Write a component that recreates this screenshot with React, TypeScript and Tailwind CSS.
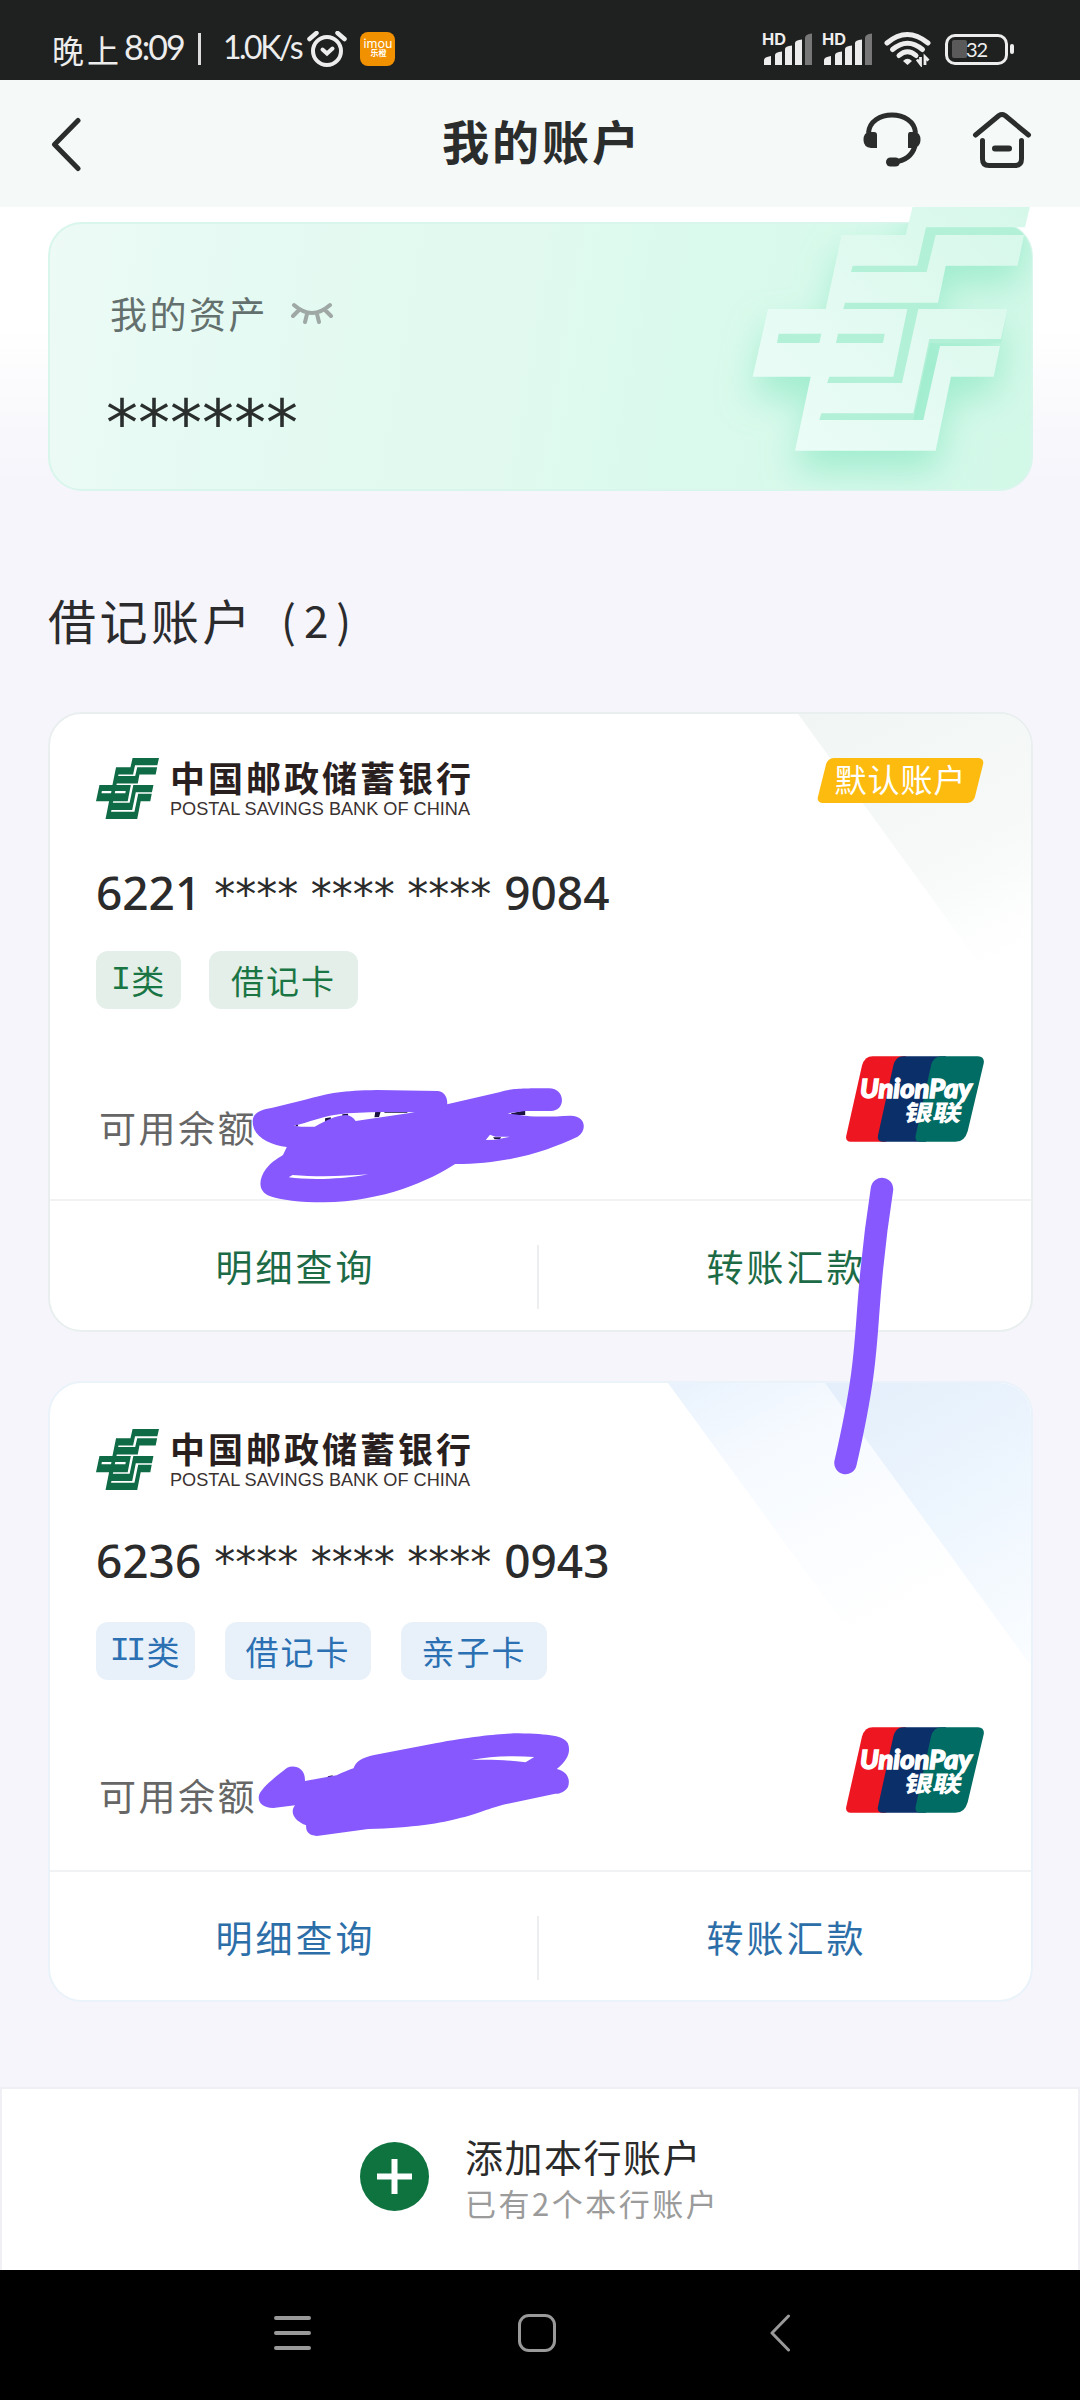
import clsx from 'clsx';

type Theme = 'green' | 'blue';

interface Account {
  id: string;
  head: string;
  tail: string;
  level: string;
  tags: string[];
  theme: Theme;
  isDefault?: boolean;
}

const accounts: Account[] = [
  { id: 'a1', head: '6221', tail: '9084', level: 'I', tags: ['借记卡'], theme: 'green', isDefault: true },
  { id: 'a2', head: '6236', tail: '0943', level: 'II', tags: ['借记卡', '亲子卡'], theme: 'blue' },
];

const MARK_PATH =
  'M645 20H997L975 112H678L652 227H458L453 246H680L707 135H972L953 227H737L714 338H435L430 357H622L580 560H388L382 579H606L655 357H923L903 447H688L640 670H364L358 690H670L720 468H900L881 560H753L707 782H285L332 560H158L204 357H377L425 135H617ZM236 431L231 459H358L364 431ZM414 431L408 459H549L554 431Z';
const MARK_OUTLINE =
  'M645 20H997L953 227H737L714 357H923L881 560H753L707 782H285L332 560H158L204 357H377L425 135H617Z';

function Signal() {
  return (
    <svg className="h-[34px] w-[52px] overflow-visible" viewBox="0 0 52 34" fill="#ededed">
      <text x="0" y="12.500" fontSize="16" fontWeight="700" textLength="24" lengthAdjust="spacingAndGlyphs" fontFamily="Inter, sans-serif">
        HD
      </text>
      <path d="M2 33V28Q2 25 9 24V33Z M13 33V23Q13 20 20 19.500V33Z M23 33V17Q23 14 30 13.500V33Z M33 33V11Q33 8 40 7.500V33Z" />
      <path d="M43 33V6Q43 2 50 1.500V33Z" fill="#777" />
    </svg>
  );
}

function StatusBar() {
  return (
    <div className="flex h-20 items-center bg-[#1f2120] pt-[18px] pl-[52px] text-[#ededed]">
      <div className="flex h-10 w-[255px] items-center text-[32px] leading-10">
        <span className="w-[72px] tracking-[3px]">晚上</span>
        <span className="relative top-[-2px] w-[74px] font-['Lato'] text-[34px] tracking-[-2px]">8:09</span>
        <span className="h-8 w-[3px] bg-[#dcdcdc]" />
        <span className="relative top-[-2px] ml-[22px] font-['Lato'] text-[32px] tracking-[-2.500px]">1.0K/s</span>
      </div>
      <svg className="h-9 w-10" viewBox="0 0 40 36" fill="none" stroke="#ededed" strokeLinecap="round">
        <circle cx="20" cy="20" r="14" strokeWidth="4" />
        <path d="M2.500 8L9.500 2M37.500 8L30.500 2" strokeWidth="4.500" />
        <path d="M15.500 18.500L20 22.500L25.500 17.500" strokeWidth="4" />
      </svg>
      <div className="ml-[13px] flex h-[34px] w-[35px] flex-col items-center justify-center rounded-lg bg-[#f29100] text-white">
        <svg className="h-7 w-[30px] overflow-visible" viewBox="0 0 30 28" fill="#fff">
          <text x="0.500" y="13" fontSize="12" textLength="29" lengthAdjust="spacingAndGlyphs" fontFamily="Inter, sans-serif">
            imou
          </text>
          <text x="7.500" y="20.500" fontSize="8" fontWeight="700" fontFamily="Noto Sans CJK SC, sans-serif">
            乐橙
          </text>
        </svg>
      </div>
      <div className="ml-[367px] flex items-center">
        <Signal />
        <div className="ml-2">
          <Signal />
        </div>
        <svg className="ml-[10px] h-[36px] w-[48px]" viewBox="0 0 48 36" fill="none" stroke="#ededed">
          <path d="M3 12Q23 -5 44 12" strokeWidth="5" strokeLinecap="round" />
          <path d="M8.500 18.500Q23.500 6 38.500 18.500M15 24.500Q23.500 17 32 24.500" strokeWidth="5" strokeLinecap="round" />
          <path d="M19 30Q23.500 25.500 28 30L23.500 34Z" fill="#ededed" stroke="none" />
          <path d="M33 28.500L36.500 33V26M44.500 29.500L41 26V34" strokeWidth="2.800" />
        </svg>
        <div className="ml-[13px] flex items-center">
          <div className="flex h-[31px] w-[63px] items-center rounded-[10px] border-[3px] border-[#ededed] pl-1">
            <div className="h-[18px] w-[15px] rounded-[2px] bg-[#5a5a5a]" />
            <span className="-ml-px font-['Lato'] text-[20px] leading-none tracking-[-1px]">32</span>
          </div>
          <div className="ml-[2px] h-[10px] w-1 rounded-[2px] bg-[#ededed]" />
        </div>
      </div>
    </div>
  );
}

function Header() {
  return (
    <header className="relative z-10 flex h-[127px] items-center bg-[#f5f9f8] text-[#2b2d2d]">
      <svg className="ml-[50px] h-14 w-8" viewBox="0 0 32 56" fill="none" stroke="currentColor" strokeWidth="5">
        <path d="M28 4.500L4.500 28.500L28 52.500" strokeLinecap="round" strokeLinejoin="round" />
      </svg>
      <h1 className="ml-[360px] w-[420px] pb-[7px] text-[47px] leading-[60px] font-bold tracking-[3px]">我的账户</h1>
      <svg className="-mt-[9px] h-14 w-[60px]" viewBox="0 0 60 56" fill="none" stroke="currentColor">
        <path d="M6.500 22C8 -2 52 -2 53.500 22" strokeWidth="5" />
        <path d="M53 35C50 45 42 50 32 51" strokeWidth="5" />
        <path d="M8 21H12Q15 21 15 24V37H9Q1.500 36 1.500 29Q1.500 21 8 21Z" fill="currentColor" stroke="none" />
        <path d="M52 21H48Q46 21 46 24V37H51Q58.500 36 58.500 29Q58.500 21 52 21Z" fill="currentColor" stroke="none" />
        <rect x="24" y="46.500" width="14" height="9" rx="4.500" fill="currentColor" stroke="none" />
      </svg>
      <svg className="-mt-[8px] ml-[50px] h-[58px] w-[60px]" viewBox="0 0 60 58" fill="none" stroke="currentColor" strokeWidth="5" strokeLinecap="round">
        <path d="M3.500 24L27 4.500Q30 2.500 33 4.500L56.500 24" strokeLinejoin="round" />
        <path d="M10.500 29.500V48Q10.500 54.500 17 54.500H43Q49.500 54.500 49.500 48V29.500" />
        <path d="M23 37.500H37" strokeWidth="6" />
      </svg>
    </header>
  );
}

function AssetCard() {
  return (
    <section className="relative h-[269px] w-[985px] rounded-[34px] border-2 border-[#d9f6ec] bg-linear-[100deg,#edfaf6_0%,#e4faf2_22%,#e1f9ee_48%,#dbfaed_60%,#d2f8e8_100%] pt-[64px] pl-[60px]">
      {/* embossed bank mark, its top runs under the header */}
      <svg
        className="absolute top-[-34px] left-[650px] h-[320px] w-[380px] overflow-visible"
        viewBox="0 0 1140 960"
        aria-hidden
      >
        <defs>
          <linearGradient id="emboss" x1="0" y1="1" x2="1" y2="0">
            <stop offset="0" stopColor="#ecfdf8" />
            <stop offset="0.500" stopColor="#e2faf1" />
            <stop offset="1" stopColor="#d5f8e9" />
          </linearGradient>
          <clipPath id="assetClip">
            <rect x="-1950" y="100" width="2946" height="800" rx="100" />
          </clipPath>
          <filter id="soft" x="-40%" y="-40%" width="180%" height="180%">
            <feGaussianBlur stdDeviation="52" />
          </filter>
        </defs>
        <g clipPath="url(#assetClip)">
          <path d={MARK_OUTLINE} transform="translate(0 60)" fill="#a2edd0" filter="url(#soft)" />
          <path d="M678 112H975L953 227H737L714 357H923L903 460H690L640 690H358L388 560H200L230 431H414L458 227H652Z" fill="#b3f0d8" />
        </g>
        <path d={MARK_PATH} fill="url(#emboss)" fillRule="evenodd" />
      </svg>
      <div className="flex h-[50px] items-center">
        <span className="text-[37px] leading-[50px] tracking-[2.500px] text-[#64706d]">我的资产</span>
        <svg className="ml-[23px] h-6 w-[42px]" viewBox="0 0 42 24" fill="none" stroke="#9fa8a5" strokeWidth="4" strokeLinecap="round">
          <path d="M3 4Q21 20 39 4M8 9L2 15M34 9L40 15M16 13L14 21M26 13L28 21" />
        </svg>
      </div>
      <div className="mt-[49px] -ml-1 font-['DejaVu_Sans'] text-[64px] leading-[72px] text-[#2a2f2e]">******</div>
    </section>
  );
}

function BankLogo() {
  return (
    <svg className="h-[62px] w-[380px] overflow-visible" viewBox="0 0 380 62">
      <svg x="0" y="0" width="63" height="61" viewBox="158 20 839 762" preserveAspectRatio="none">
        <path d={MARK_PATH} fill="#0f6b45" fillRule="evenodd" />
      </svg>
      <text x="74" y="33.500" fontSize="35" fontWeight="700" fill="#2a1f1f" textLength="301" fontFamily="Noto Sans CJK SC, sans-serif">
        中国邮政储蓄银行
      </text>
      <text x="74" y="57" fontSize="18.500" fill="#3a3131" textLength="300" lengthAdjust="spacingAndGlyphs" fontFamily="Liberation Sans, sans-serif">
        POSTAL SAVINGS BANK OF CHINA
      </text>
    </svg>
  );
}

function UnionPay() {
  return (
    <svg className="mt-[2px] mr-px h-[86px] w-[138px] shrink-0" viewBox="0 0 414 257" fill="#fff">
      <path d="M80 0H180L120 257H14Q-3 256 1 238L48 28Q56 0 80 0Z" fill="#ee1620" />
      <path d="M172 0H300L240 257H110Q92 256 96 238L142 28Q149 0 172 0Z" fill="#0b2f68" />
      <path d="M288 0H396Q417 2 413 22L365 225Q356 257 328 257H224Q205 256 209 238L255 28Q262 0 288 0Z" fill="#006c63" />
      <text
        x="42"
        y="127"
        fontSize="80"
        fontWeight="900"
        fontStyle="italic"
        stroke="#fff"
        strokeWidth="4"
        textLength="336"
        lengthAdjust="spacingAndGlyphs"
        fontFamily="Lato, sans-serif"
      >
        UnionPay
      </text>
      <text transform="translate(171 195) skewX(-12)" fontSize="68" fontWeight="900" textLength="172" lengthAdjust="spacingAndGlyphs" fontFamily="Noto Sans CJK SC, sans-serif">
        银联
      </text>
    </svg>
  );
}

function CardBackdrop({ theme }: { theme: Theme }) {
  return (
    <svg className="absolute top-0 right-0 h-[300px] w-[400px]" viewBox="0 0 400 300" aria-hidden>
      <defs>
        <linearGradient id="mist" x1="0" y1="0" x2="0.400" y2="1">
          <stop offset="0" stopColor="#f1f6f5" />
          <stop offset="0.600" stopColor="#f6f9f8" />
          <stop offset="1" stopColor="#ffffff" />
        </linearGradient>
        <linearGradient id="skyA" gradientUnits="userSpaceOnUse" x1="60" y1="0" x2="200" y2="270">
          <stop offset="0" stopColor="#eaf3fd" />
          <stop offset="0.300" stopColor="#f6faff" />
          <stop offset="1" stopColor="#ffffff" />
        </linearGradient>
        <linearGradient id="skyB" gradientUnits="userSpaceOnUse" x1="220" y1="0" x2="390" y2="290">
          <stop offset="0" stopColor="#e4effb" />
          <stop offset="0.500" stopColor="#eef6fe" />
          <stop offset="1" stopColor="#fbfdff" />
        </linearGradient>
      </defs>
      {theme === 'green' ? (
        <path d="M167 0H400V300H385Z" fill="url(#mist)" />
      ) : (
        <>
          <path d="M37 0H400V300H256Z" fill="url(#skyA)" />
          <path d="M194 0H400V283Z" fill="url(#skyB)" />
        </>
      )}
    </svg>
  );
}

function AccountCard({ account }: { account: Account }) {
  const green = account.theme === 'green';
  const tagStyle = clsx(
    'flex items-center justify-center rounded-xl text-[33px] leading-[58px] tracking-[2px]',
    green ? 'bg-[#e4efe9] text-[#1a7545]' : 'bg-[#e8f1f9] text-[#2b70b2]'
  );
  return (
    <article
      className={clsx(
        'relative w-[985px] overflow-hidden rounded-[34px] border-2 bg-white',
        green ? 'h-[620px] border-[#e9efef]' : 'h-[621px] border-[#eaf2fa]'
      )}
    >
      <CardBackdrop theme={account.theme} />
      <div className={clsx('relative px-[46px]', green ? 'h-[485px] pt-11' : 'h-[487px] pt-[46px]')}>
        <div className="flex h-[62px] justify-between">
          <BankLogo />
          {account.isDefault && (
            <div className="relative flex h-[45px] w-[169px] items-center justify-center">
              <div className="absolute inset-y-0 right-[6px] left-[6px] -skew-x-[14deg] rounded-[6px] bg-[#fdbb10]" />
              <span className="relative -top-0.5 text-[32px] leading-[45px] tracking-[1px] text-white">默认账户</span>
            </div>
          )}
        </div>
        <div
          className={clsx(
            'flex h-[60px] items-center font-["Noto_Sans"] text-[46px] font-medium text-[#2b2b2b]',
            green ? 'mt-[42px] mb-[29px]' : 'mt-[39px] mb-[32px]'
          )}
        >
          <span>{account.head}</span>
          <span className="mt-1 ml-[13px] flex gap-[12.500px] font-['DejaVu_Sans'] text-[42px] font-normal">
            <span>****</span>
            <span>****</span>
            <span>****</span>
          </span>
          <span className="ml-[13px]">{account.tail}</span>
        </div>
        <div className={clsx('flex h-[58px]', green ? 'gap-7' : 'gap-[30px]')}>
          <span className={clsx(tagStyle, green ? 'w-[85px]' : 'w-[99px]')}>
            <span className="font-['Liberation_Mono'] text-[34px] tracking-[-4px]">{account.level}</span>
            <span className="ml-1">类</span>
          </span>
          {account.tags.map((tag) => (
            <span key={tag} className={clsx(tagStyle, green ? 'w-[149px]' : 'w-[146px]')}>
              {tag}
            </span>
          ))}
        </div>
        <div className="mt-[45px] flex h-[88px] justify-between">
          <span
            className={clsx(
              'pl-[3px] text-[37px] leading-[50px] tracking-[2.500px] text-[#666]',
              green ? 'pt-[48px]' : 'pt-[45px]'
            )}
          >
            可用余额
          </span>
          <UnionPay />
        </div>
      </div>
      <div
        className={clsx(
          'relative flex h-[133px] border-t-2 border-[#f0f2f3] text-[37px] leading-[50px] tracking-[3px]',
          green ? 'text-[#1c6b46]' : 'text-[#2c6ea8]'
        )}
      >
        <button className="mb-px w-[487px] pl-1">明细查询</button>
        <span className="mt-[44px] h-16 w-[2px] bg-[#eceeef]" />
        <button className="mb-px w-[491px] pl-1">转账汇款</button>
      </div>
    </article>
  );
}

function BottomBar() {
  return (
    <div className="flex h-[183px] items-center border-x-2 border-t-2 border-[#f0f0f4] bg-white pb-[6px] pl-[358px]">
      <svg className="h-[69px] w-[69px]" viewBox="0 0 69 69">
        <circle cx="34.500" cy="34.500" r="34.500" fill="#0f7340" />
        <path d="M17 34.500H52M34.500 17V52" stroke="#fff" strokeWidth="6" />
      </svg>
      <div className="ml-[36px] flex flex-col pt-[4px]">
        <span className="text-[38px] leading-[48px] tracking-[1.500px] text-[#2a2a2a]">添加本行账户</span>
        <span className="text-[31px] leading-[46px] tracking-[2.500px] text-[#9b9b9b]">已有2个本行账户</span>
      </div>
    </div>
  );
}

function NavBar() {
  return (
    <nav className="flex h-[130px] items-center bg-black pb-1 pl-[273px]">
      <svg className="h-[38px] w-[39px]" viewBox="0 0 39 38" stroke="#999" strokeWidth="4" strokeLinecap="round">
        <path d="M3 4H36M3 19H36M3 34H36" />
      </svg>
      <div className="ml-[206px] h-[38px] w-[38px] rounded-[11px] border-[3px] border-[#999]" />
      <svg className="ml-[213px] h-[38px] w-[21px]" viewBox="0 0 21 38" fill="none" stroke="#999" strokeWidth="3">
        <path d="M19.500 2L3 19L19.500 36" strokeLinecap="round" strokeLinejoin="round" />
      </svg>
    </nav>
  );
}

function Scribbles() {
  return (
    <svg className="pointer-events-none absolute inset-0 z-20 h-[2400px] w-[1080px]" viewBox="0 0 1080 2400" aria-hidden>
      <g transform="translate(40 1040) scale(.38265 .33333)">
        <path d="M668 252L674 252V259H668ZM745 235L760 232V243L745 247ZM790 223L805 221V228H790ZM876 216H890L886 231L874 232ZM900 214H960V218H900ZM1232 220L1268 211V225H1228ZM1184 292H1205L1202 298H1188Z" fill="#1b1440" />
        <path
          fillRule="evenodd"
          fill="#8658fe"
          d="M556 240C558 218 580 208 605 204L690 180C760 158 790 152 880 150L1040 153C1058 155 1066 175 1064 193L1200 157C1230 146 1250 145 1330 145C1374 145 1375 213 1335 213L1268 213L1222 220L1268 227C1300 231 1340 230 1385 227C1425 225 1432 270 1405 290C1330 330 1230 372 1085 372C1020 420 900 485 740 487C680 487 630 480 600 468C570 455 570 420 590 388C605 363 630 350 635 345L645 321C600 315 553 290 556 240ZM663 257C700 250 740 225 805 220C860 216 920 215 980 217L825 243Q815 226 800 225C770 228 750 240 718 260Q690 262 663 257ZM1165 300L1176 284L1190 290L1228 290L1190 299ZM650 412L660 405C730 412 800 408 858 403C780 420 700 420 650 412Z"
        />
      </g>
      <path d="M728 229L740 226V230L728 232Z" transform="translate(40 1700) scale(.39541 .33333)" fill="#1b1440" />
      <path
        transform="translate(40 1700) scale(.39541 .33333)"
        fillRule="evenodd"
        fill="#8658fe"
        d="M554 285C560 265 590 235 625 203C645 193 672 205 670 243L750 226Q775 212 793 205C798 185 815 172 845 165L1000 130C1100 108 1180 100 1210 100C1290 102 1325 108 1335 130C1343 155 1335 180 1307 207C1335 215 1342 240 1335 262C1325 280 1310 282 1300 282L1180 312C1110 330 1060 380 830 387L700 408C680 407 672 395 673 376C640 360 632 335 645 316L590 324C560 322 550 305 554 285ZM1090 180C1140 168 1200 166 1250 171L1228 187C1180 180 1140 178 1090 180Z"
      />
      <path
        d="M882 1189C860 1330 876 1330 845.500 1463"
        fill="none"
        stroke="#8658fe"
        strokeWidth="22.500"
        strokeLinecap="round"
      />
    </svg>
  );
}

export default function App() {
  return (
    <div className="relative flex h-[2400px] w-[1080px] flex-col overflow-hidden bg-[#f5f5fb] font-['Noto_Sans_CJK_SC',sans-serif]">
      <StatusBar />
      <Header />
      <main className="flex h-[1880px] flex-col bg-linear-[180deg,#ffffff_0px,#ffffff_120px,#f5f5fb_275px] pt-[15px] pl-12">
        <AssetCard />
        <h2 className="mt-[93px] flex h-[70px] items-center text-[48px] leading-[70px] tracking-[3.500px] text-[#2b2b2e]">
          借记账户
          <span className="ml-[27px] text-[44px] tracking-[8px]">(2)</span>
        </h2>
        <div className="mt-[58px] flex flex-col gap-[49px]">
          {accounts.map((account) => (
            <AccountCard key={account.id} account={account} />
          ))}
        </div>
      </main>
      <BottomBar />
      <NavBar />
      <Scribbles />
    </div>
  );
}
